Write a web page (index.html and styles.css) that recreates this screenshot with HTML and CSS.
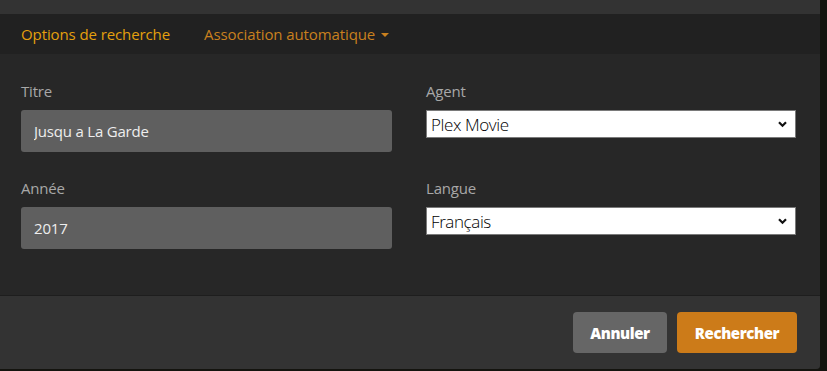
FILE: index.html
```html
<!DOCTYPE html>
<html lang="fr">
<head>
    <meta charset="UTF-8">
    <meta name="viewport" content="width=device-width, initial-scale=1.0">
    <title>Rechercher une correspondance</title>
    <link rel="stylesheet" href="styles.css">
</head>
<body>
    <div class="modal">
        <div class="modal-top"></div>

        <div class="tabs">
            <a class="tab active" href="#">Options de recherche</a>
            <a class="tab" href="#">Association automatique <span class="caret"></span></a>
        </div>

        <form class="search-form">
            <div class="form-grid">
                <div class="field">
                    <label for="title">Titre</label>
                    <input id="title" class="text-input" type="text" value="Jusqu a La Garde">
                </div>
                <div class="field">
                    <label for="agent">Agent</label>
                    <div class="select-wrap">
                        <select id="agent" class="select">
                            <option>Plex Movie</option>
                        </select>
                        <svg class="chevron" width="9" height="7" viewBox="0 0 9 7"><path d="M1 1.3 L4.5 4.8 L8 1.3" fill="none" stroke="#111" stroke-width="2.2"/></svg>
                    </div>
                </div>
                <div class="field">
                    <label for="year">Année</label>
                    <input id="year" class="text-input" type="text" value="2017">
                </div>
                <div class="field">
                    <label for="lang">Langue</label>
                    <div class="select-wrap">
                        <select id="lang" class="select">
                            <option>Français</option>
                        </select>
                        <svg class="chevron" width="9" height="7" viewBox="0 0 9 7"><path d="M1 1.3 L4.5 4.8 L8 1.3" fill="none" stroke="#111" stroke-width="2.2"/></svg>
                    </div>
                </div>
            </div>
        </form>

        <div class="modal-footer">
            <button class="btn btn-default" type="button">Annuler</button>
            <button class="btn btn-primary" type="button">Rechercher</button>
        </div>
    </div>
</body>
</html>
```

FILE: styles.css
```css
body {
    margin: 0;
    background-color: #14140f;
    font-family: "Open Sans", "Noto Sans", Arial, sans-serif;
    height: 371px;
    overflow: hidden;
}

.modal {
    width: 820px;
    height: 369px;
    background-color: #272727;
    border-bottom-right-radius: 4px;
    overflow: hidden;
    display: flex;
    flex-direction: column;
}

.modal-top {
    height: 14px;
    background-color: #333;
}

.tabs {
    height: 40px;
    background-color: #212121;
    display: flex;
    align-items: center;
    gap: 34px;
    padding-left: 21px;
}

.tab {
    font-size: 15px;
    color: #c9801e;
    text-decoration: none;
    letter-spacing: -0.1px;
}

.tab.active {
    color: #e5a00d;
}

.caret {
    display: inline-block;
    width: 0;
    height: 0;
    border-left: 4px solid transparent;
    border-right: 4px solid transparent;
    border-top: 4px solid #c9801e;
    vertical-align: 3px;
    margin-left: 2px;
}

.search-form {
    flex: 1;
    padding: 27px 24px 0 21px;
    border-bottom: 1px solid #1e1e1e;
}

.form-grid {
    display: grid;
    grid-template-columns: 371px 370px;
    column-gap: 34px;
    row-gap: 26px;
}

.field label {
    display: block;
    font-size: 15px;
    color: #a8a8a8;
    letter-spacing: -0.2px;
    line-height: 20px;
    margin-bottom: 9px;
}

.text-input {
    box-sizing: border-box;
    width: 100%;
    height: 42px;
    border: none;
    border-radius: 3px;
    background-color: #5f5f5f;
    color: #eee;
    font-family: inherit;
    font-size: 15px;
    letter-spacing: -0.2px;
    padding: 0 13px;
}

.select-wrap {
    position: relative;
}

.select {
    appearance: none;
    -webkit-appearance: none;
    box-sizing: border-box;
    width: 100%;
    height: 28px;
    border: 1px solid #7a7a7a;
    border-radius: 0;
    background-color: #fff;
    color: #000;
    font-family: inherit;
    font-weight: 300;
    font-size: 17px;
    padding: 0 4px;
    letter-spacing: -0.4px;
}

.chevron {
    position: absolute;
    right: 9px;
    top: 11px;
    pointer-events: none;
}

.modal-footer {
    height: 73px;
    background-color: #333;
    display: flex;
    justify-content: flex-end;
    align-items: center;
    gap: 10px;
    padding-right: 23px;
}

.btn {
    height: 41px;
    border: none;
    border-radius: 4px;
    color: #fff;
    font-family: "Open Sans", Arial, sans-serif;
    font-weight: 800;
    font-size: 15px;
    letter-spacing: -0.4px;
    cursor: pointer;
}

.btn-default {
    width: 94px;
    background-color: #666;
}

.btn-primary {
    width: 120px;
    background-color: #cc7b19;
}
```
